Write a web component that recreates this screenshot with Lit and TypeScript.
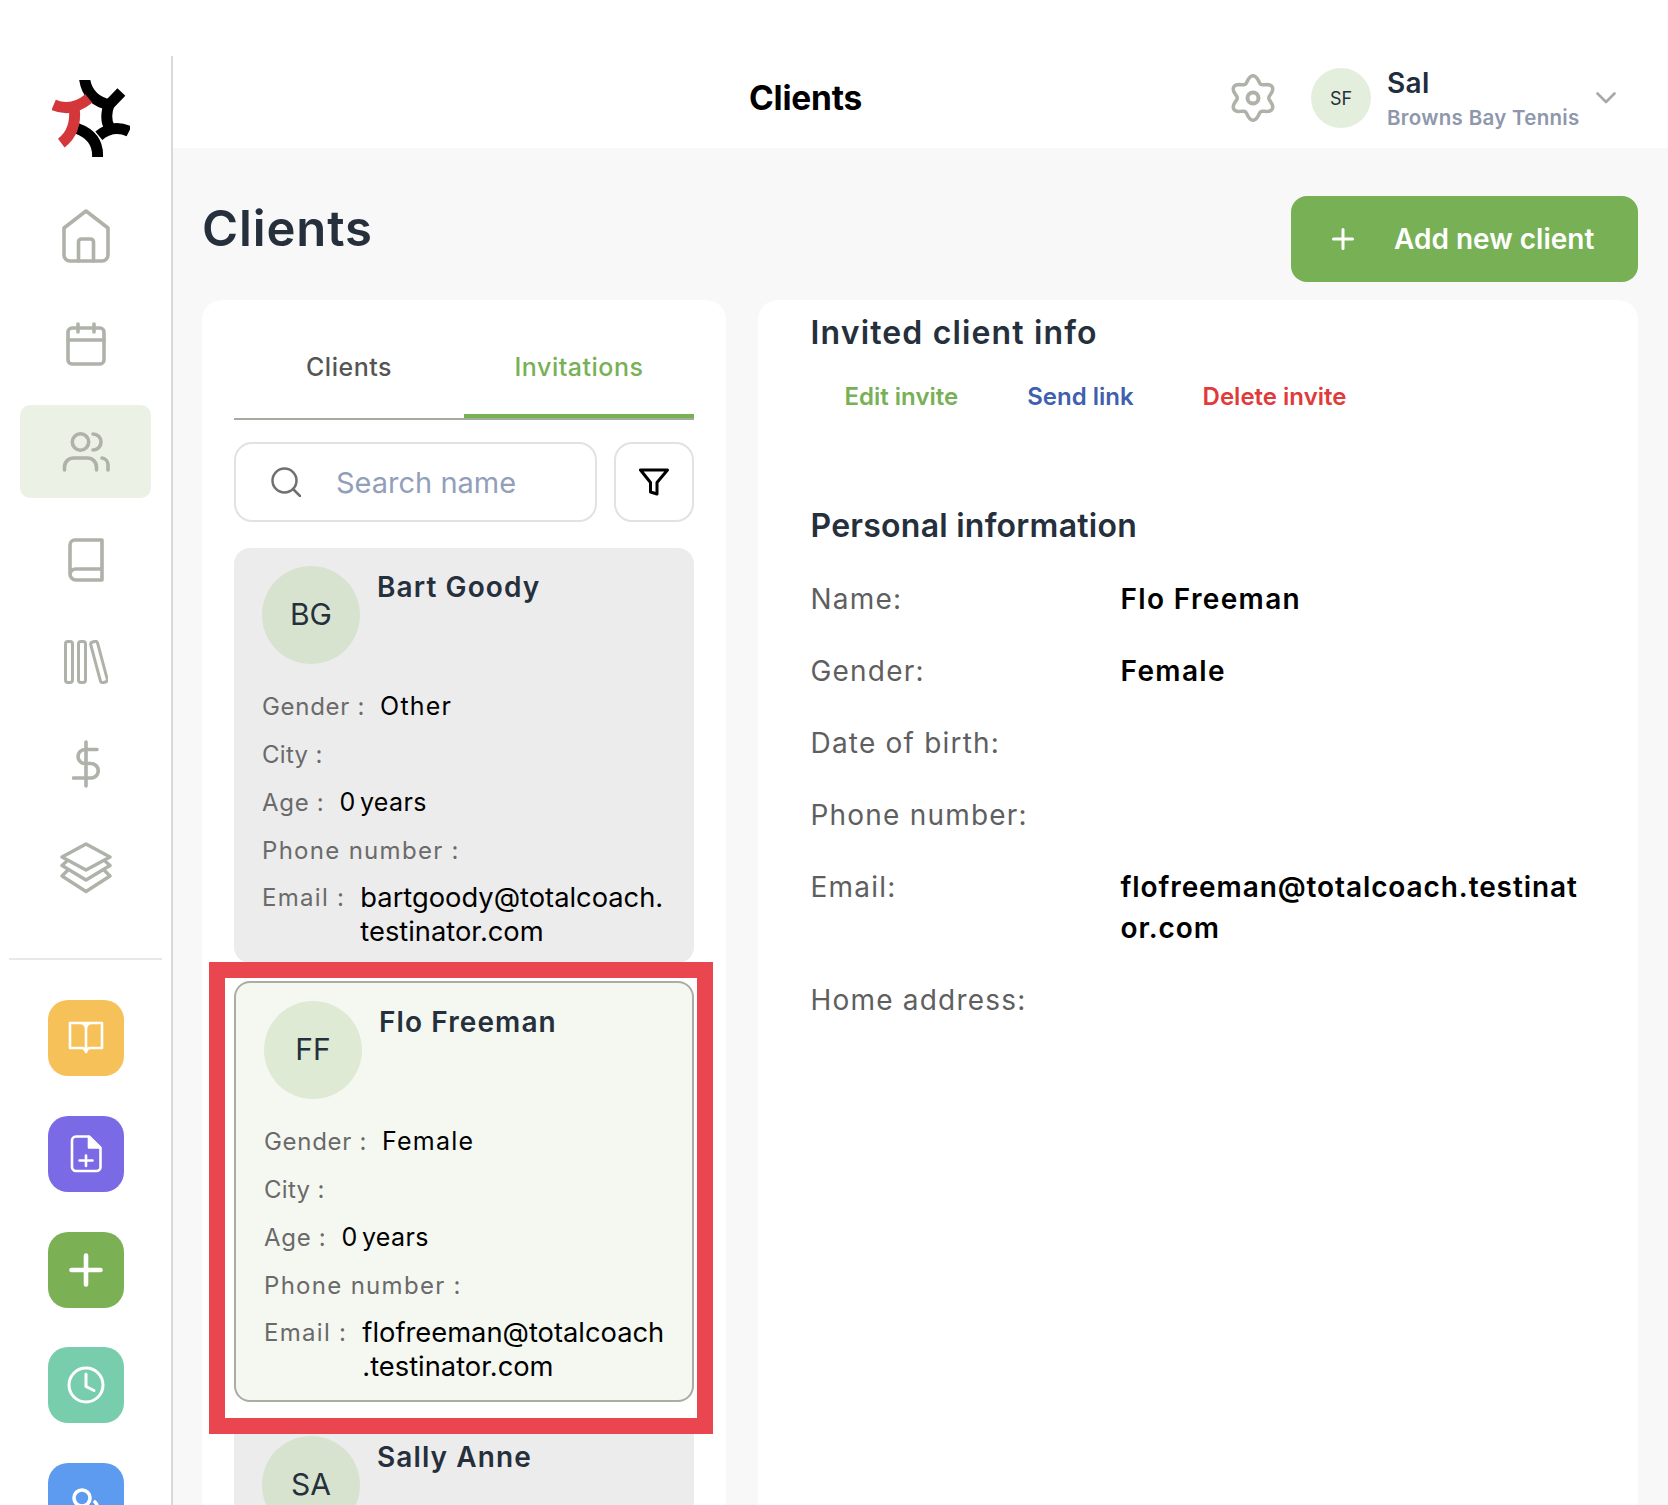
import { LitElement, html, css } from "lit";
import { customElement } from "lit/decorators.js";

const gearPath = (() => {
  const pts: string[] = [];
  for (let d = 0; d < 360; d += 4) {
    const t = (d * Math.PI) / 180;
    const r = 19 - 3.25 * Math.cos(6 * t);
    pts.push(`${(22 + r * Math.cos(t)).toFixed(2)} ${(24 + r * Math.sin(t)).toFixed(2)}`);
  }
  return "M" + pts.join("L") + "Z";
})();

const navItems = [
  { mt: 52, active: false, icon: html`<svg class="ic" width="48" height="54" viewBox="0 0 48 54" stroke-width="3.6"><path d="M24 2 46 19V46a6 6 0 0 1-6 6H8a6 6 0 0 1-6-6V19Z"/><path d="M16.5 52V33a3 3 0 0 1 3-3h9a3 3 0 0 1 3 3V52"/></svg>` },
  { mt: 59, active: false, icon: html`<svg class="ic" width="40" height="44" viewBox="0 0 40 44" stroke-width="3.6"><rect x="2" y="6" width="36" height="36" rx="4"/><path d="M2 18H38M12 2V10M28 2V10"/></svg>` },
  { mt: 39, active: true, icon: html`<svg class="ic" width="48" height="40" viewBox="0 0 48 40" stroke-width="3.6"><circle cx="18.5" cy="10" r="8.2"/><path d="M31 2a8 8 0 0 1 0 16M2.5 38V35a9 9 0 0 1 9-9h14a9 9 0 0 1 9 9v3M40 26a7 7 0 0 1 6 7v5"/></svg>` },
  { mt: 40, active: false, icon: html`<svg class="ic" width="36" height="44" viewBox="0 0 36 44" stroke-width="3.6"><path d="M2 36V7a5 5 0 0 1 5-5H34V42H8a6 6 0 0 1-6-6a5.500 5.500 0 0 1 6-5H34"/></svg>` },
  { mt: 58, active: false, icon: html`<svg class="ic" width="44" height="44" viewBox="0 0 44 44" stroke-width="3"><rect x="1.500" y="1.500" width="7" height="41" rx="2.500"/><rect x="14.500" y="1.500" width="7" height="41" rx="2.500"/><rect x="31.500" y="1" width="7" height="42" rx="2.500" transform="rotate(-15 35 22)"/></svg>` },
  { mt: 56, active: false, icon: html`<svg class="ic" width="28" height="48" viewBox="0 0 28 48" stroke-width="3.6"><path d="M14 2V46M25 9.500H13a7 7 0 0 0 0 14h6a7.200 7.200 0 0 1 0 14.500H1.500"/></svg>` },
  { mt: 54, active: false, icon: html`<svg class="ic" width="52" height="52" viewBox="0 0 52 52" stroke-width="3.4"><path d="M26 2 50 15 26 28 2 15Z"/><path d="M7 19 2 23.500 26 38 50 23.500 45 19M7 29 2 34 26 49.500 50 34 45 29"/></svg>` },
];

const actions = [
  { c: "yellow", icon: html`<svg class="ic white" width="36" height="34" viewBox="0 0 36 34" stroke-width="2.600"><path d="M2 2h10c3.500 0 6 2.500 6 6v22M34 2H24c-3.500 0-6 2.500-6 6M2 2V27h12c2 0 3 1 4 4 1-3 2-4 4-4h12V2Z"/></svg>` },
  { c: "purple", icon: html`<svg class="ic white" width="32" height="38" viewBox="0 0 32 38" stroke-width="2.600"><path d="M6 1.500H19L30.500 13V32a4 4 0 0 1-4 4H6a4 4 0 0 1-4-4V5.500a4 4 0 0 1 4-4Z"/><path d="M19 2V12.500H30Z" fill="#fff"/><path d="M16 20.500V31M9.500 25.500H22.500"/></svg>` },
  { c: "green", icon: html`<svg class="ic white" width="34" height="34" viewBox="0 0 34 34" stroke-width="4.600"><path d="M17 2.500V31.500M2.500 17H31.500"/></svg>` },
  { c: "teal", icon: html`<svg class="ic white" width="38" height="38" viewBox="0 0 38 38" stroke-width="3"><circle cx="19" cy="19" r="17"/><path d="M19 8V20.500L27 24.500"/></svg>` },
  { c: "blue", icon: html`<svg class="ic white" width="40" height="38" viewBox="0 0 40 38" stroke-width="3.600"><circle cx="16" cy="16" r="8"/><path d="M29 20a6 6 0 0 1 0 9M2.500 38V37a8 8 0 0 1 8-8h12a8 8 0 0 1 8 8v1"/></svg>` },
];

type Client = { i: string; n: string; g?: string; e?: string[]; sel: boolean };
const clients: Client[] = [
  { i: "BG", n: "Bart Goody", g: "Other", e: ["bartgoody@totalcoach.", "testinator.com"], sel: false },
  { i: "FF", n: "Flo Freeman", g: "Female", e: ["flofreeman@totalcoach", ".testinator.com"], sel: true },
  { i: "SA", n: "Sally Anne", sel: false },
];

const info: { l: string; v?: string[] }[] = [
  { l: "Name:", v: ["Flo Freeman"] },
  { l: "Gender:", v: ["Female"] },
  { l: "Date of birth:" },
  { l: "Phone number:" },
  { l: "Email:", v: ["flofreeman@totalcoach.testinat", "or.com"] },
  { l: "Home address:" },
];

@customElement("app-root")
export class AppRoot extends LitElement {
  static styles = css`
    :host { display: flex; width: 1668px; height: 1505px; overflow: hidden; background: #fff; font-family: Inter, "Liberation Sans", sans-serif; color: #25303c; }
    * { box-sizing: border-box; }
    .ic { display: block; fill: none; stroke: #aeb2a8; stroke-linecap: round; stroke-linejoin: round; flex: none; }
    .ic.white { stroke: #fff; }
    .side { width: 173px; flex: none; margin-top: 56px; padding-top: 24px; border-right: 2px solid #d9d9d9; display: flex; flex-direction: column; align-items: center; }
    .logo { display: block; flex: none; margin-left: 10px; }
    .nav { width: 131px; flex: none; display: flex; align-items: center; justify-content: center; }
    .nav.active { height: 93px; background: #ebf2e5; border-radius: 10px; }
    .rule { width: 153px; height: 2px; background: #e8e8e8; margin-top: 64px; margin-bottom: 40px; flex: none; }
    .act { width: 76px; height: 76px; flex: none; border-radius: 20px; display: flex; align-items: center; justify-content: center; margin-bottom: 39.800px; }
    .yellow { background: #f6c159; } .purple { background: #7b6ae6; } .green { background: #7bb154; } .teal { background: #78cdad; } .blue { background: #5c9bef; }
    .main { flex: 1; min-width: 0; display: flex; flex-direction: column; background: #f8f8f8; }
    .head { height: 148px; flex: none; padding-top: 48px; background: #fff; display: flex; align-items: center; }
    .head-title { margin-left: 576px; width: 482px; font-size: 33.500px; font-weight: 700; letter-spacing: -0.2px; color: #000; }
    .avatar-s { width: 60px; height: 60px; border-radius: 50%; background: #e4eedd; margin-left: 36px; margin-right: 16px; display: flex; align-items: center; justify-content: center; font-size: 18px; }
    .who { width: 209px; display: flex; flex-direction: column; }
    .who b { font-size: 28px; font-weight: 600; line-height: 36px; color: #1f2d3d; letter-spacing: 0.3px; margin-top: -1px; }
    .who span { font-size: 20.500px; font-weight: 600; line-height: 26px; color: #8e97ac; letter-spacing: 0.3px; margin-top: 4px; white-space: nowrap; }
    .body { flex: 1; min-height: 0; padding: 48px 30px 0 29px; display: flex; flex-direction: column; }
    .top { display: flex; justify-content: space-between; height: 86px; margin-bottom: 18px; flex: none; }
    h1 { margin: 0; font-size: 49px; font-weight: 600; line-height: 66px; letter-spacing: 0.9px; color: #25303c; }
    .add { width: 347px; height: 86px; border-radius: 16px; background: #78b056; color: #fff; font-size: 28px; font-weight: 600; display: flex; align-items: center; padding-left: 41px; gap: 40px; }
    .panels { flex: 1; display: flex; gap: 32px; min-height: 0; }
    .left { width: 524px; flex: none; background: #fff; border-radius: 20px 20px 0 0; padding: 0 32px; }
    .right { flex: 1; background: #fff; border-radius: 20px 20px 0 0; padding: 12px 0 0 52.500px; }
    .tabs { display: flex; height: 120px; border-bottom: 2px solid #a6aba0; }
    .tab { flex: 1; height: 118px; padding-top: 47px; text-align: center; font-size: 25px; line-height: 40px; font-weight: 500; color: #555; letter-spacing: 0.5px; }
    .tab.on { color: #78b056; border-bottom: 4px solid #78b056; }
    .tools { display: flex; gap: 17px; margin-top: 22px; margin-bottom: 26px; }
    .search { width: 364px; height: 80px; border: 2px solid #e2e2e2; border-radius: 18px; display: flex; align-items: center; padding-left: 35px; gap: 35px; font-size: 29px; color: #929fbb; }
    .filter { width: 80px; height: 80px; border: 2px solid #e2e2e2; border-radius: 18px; display: flex; align-items: center; justify-content: center; }
    .card { position: relative; background: #ececec; border-radius: 16px; padding: 18px 28px 14px; margin-bottom: 18px; }
    .card.sel { background: #f5f8f1; border: 2px solid #a9ada3; padding-bottom: 16px; margin-bottom: 16px; }
    .mark { position: absolute; top: -21px; left: -27px; right: -21px; bottom: -34px; border: 16px solid #ea4650; pointer-events: none; z-index: 2; }
    .c-head { display: flex; gap: 17px; height: 98px; margin-bottom: 18px; }
    .av { width: 98px; height: 98px; border-radius: 50%; background: #d8e3cf; display: flex; align-items: center; justify-content: center; font-size: 30px; padding-bottom: 3px; flex: none; }
    .sel .av { background: #deead3; }
    .nm { font-size: 28px; line-height: 42px; font-weight: 600; letter-spacing: 1.1px; color: #25303c; }
    .row { display: flex; gap: 15px; height: 48px; align-items: center; font-size: 24px; letter-spacing: 0.7px; }
    .k { color: #6a6a6a; white-space: nowrap; }
    .k.wide { letter-spacing: 1.3px; }
    .k.city { letter-spacing: 0.3px; }
    .row .v { color: #000; font-size: 25px; letter-spacing: 1.2px; }
    .row .v.age { letter-spacing: 0.35px; word-spacing: -3px; }
    .mail { display: flex; gap: 15px; padding-top: 7px; font-size: 24px; }
    .mail .k { line-height: 34px; }
    .mail .v { font-size: 27.300px; line-height: 34px; color: #000; white-space: nowrap; }
    h2 { margin: 0; font-size: 32px; line-height: 42px; font-weight: 600; letter-spacing: 1.15px; color: #25303c; }
    .links { display: flex; gap: 69px; margin: 22px 0 0 34px; height: 40px; align-items: center; font-size: 24px; font-weight: 600; }
    .ledit { color: #78b056; } .lsend { color: #3f5fb0; } .ldel { color: #e03a3a; }
    h2.pers { margin-top: 89px; margin-bottom: 32px; letter-spacing: 0.25px; }
    .irow { display: flex; margin-bottom: 31px; font-size: 28px; line-height: 41px; letter-spacing: 1.2px; }
    .irow .l { width: 310px; flex: none; color: #5f5f5f; }
    .irow .w { font-weight: 600; color: #000; white-space: nowrap; letter-spacing: 1.35px; }
    .irow .w.long { letter-spacing: 0.9px; }
  `;

  card(c: Client) {
    return html`<div class="card ${c.sel ? "sel" : ""}">
      <div class="c-head"><div class="av">${c.i}</div><div class="nm">${c.n}</div></div>
      ${c.e
        ? html`<div class="row"><span class="k">Gender :</span><span class="v">${c.g}</span></div>
            <div class="row"><span class="k city">City :</span></div>
            <div class="row"><span class="k">Age :</span><span class="v age">0 years</span></div>
            <div class="row"><span class="k wide">Phone number :</span></div>
            <div class="mail"><span class="k wide">Email :</span><div class="v">${c.e[0]}<br />${c.e[1]}</div></div>`
        : ""}
      ${c.sel ? html`<div class="mark"></div>` : ""}
    </div>`;
  }

  render() {
    return html`
      <aside class="side">
        <svg class="logo" width="78" height="77" viewBox="155 120 235 232" fill="none" stroke-width="33">
          <g stroke="#000">
            <path d="M253 116Q262 182 330 195"/><path d="M322 200 364 156"/>
            <path d="M328 190Q312 235 328 262"/><path d="M296 288Q340 252 387 275"/>
            <path d="M230 266Q297 290 292 356"/>
          </g>
          <g stroke="#d4373a">
            <path d="M160 195Q215 218 266 176"/><path d="M222 205Q230 275 183 310"/>
          </g>
        </svg>
        ${navItems.map(
          (n) => html`<div class="nav ${n.active ? "active" : ""}" style="margin-top:${n.mt}px">${n.icon}</div>`
        )}
        <div class="rule"></div>
        ${actions.map((a) => html`<div class="act ${a.c}">${a.icon}</div>`)}
      </aside>
      <div class="main">
        <header class="head">
          <div class="head-title">Clients</div>
          <svg class="ic" width="44" height="48" viewBox="0 0 44 48" stroke-width="3.500"><path d="${gearPath}"/><circle cx="22" cy="24" r="5.500" stroke-width="4"/></svg>
          <div class="avatar-s">SF</div>
          <div class="who"><b>Sal</b><span>Browns Bay Tennis</span></div>
          <svg width="20" height="12" viewBox="0 0 20 12" fill="none" stroke="#a8a8a8" stroke-width="2.600" stroke-linecap="round" stroke-linejoin="round"><path d="M1.500 1.500 10 10 18.500 1.500"/></svg>
        </header>
        <div class="body">
          <div class="top">
            <h1>Clients</h1>
            <div class="add">
              <svg width="22" height="22" viewBox="0 0 22 22" fill="none" stroke="#fff" stroke-width="3" stroke-linecap="round"><path d="M11 1.500V20.500M1.500 11H20.500"/></svg>
              <span>Add new client</span>
            </div>
          </div>
          <div class="panels">
            <section class="left">
              <div class="tabs"><div class="tab">Clients</div><div class="tab on">Invitations</div></div>
              <div class="tools">
                <div class="search">
                  <svg width="30" height="30" viewBox="0 0 30 30" fill="none" stroke="#707070" stroke-width="2.500" stroke-linecap="round"><circle cx="13.500" cy="13.500" r="12"/><path d="M22.500 22.500 29 29"/></svg>
                  <span>Search name</span>
                </div>
                <div class="filter">
                  <svg width="30" height="28" viewBox="0 0 30 28" fill="none" stroke="#000" stroke-width="3" stroke-linejoin="round"><path d="M1.500 2H28.500L18 14.500V26L11.500 24V14.500Z"/></svg>
                </div>
              </div>
              ${clients.map((c) => this.card(c))}
            </section>
            <section class="right">
              <h2>Invited client info</h2>
              <div class="links"><span class="ledit">Edit invite</span><span class="lsend">Send link</span><span class="ldel">Delete invite</span></div>
              <h2 class="pers">Personal information</h2>
              ${info.map(
                (r) => html`<div class="irow"><div class="l">${r.l}</div>${r.v
                  ? html`<div class="w ${r.v.length > 1 ? "long" : ""}">${r.v.map((t, i) => html`${i ? html`<br />` : ""}${t}`)}</div>`
                  : ""}</div>`
              )}
            </section>
          </div>
        </div>
      </div>
    `;
  }
}
